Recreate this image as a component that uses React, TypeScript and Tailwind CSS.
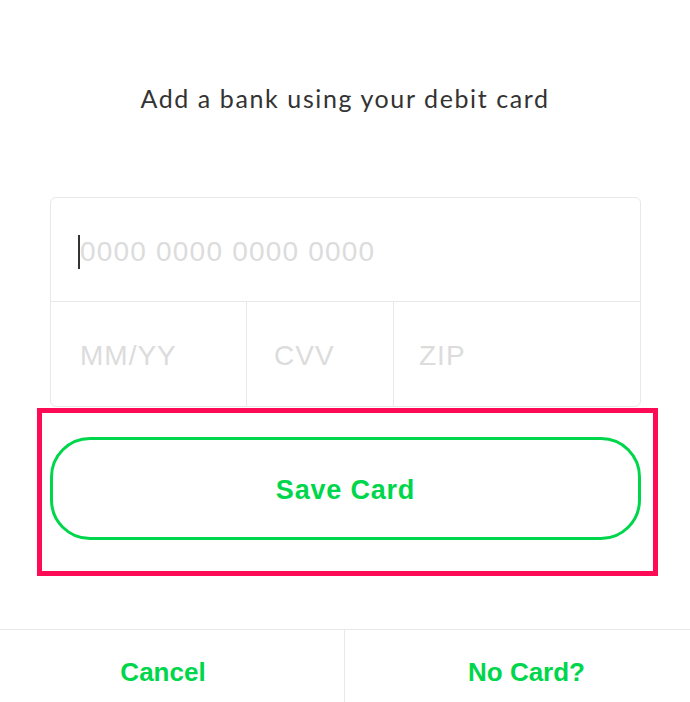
import React from "react";

export default function App() {
  return (
    <div className="w-[690px] h-[702px] bg-white flex flex-col overflow-hidden" style={{ fontFamily: '"Liberation Sans", Arial, sans-serif' }}>
      <div className="pt-[80px] h-[197px] text-center">
        <div className="text-[25px] leading-[36px] tracking-[1.6px] text-[#333333]" style={{ fontFamily: 'Lato, "Liberation Sans", sans-serif' }}>
          Add a bank using your debit card
        </div>
      </div>

      <div className="ml-[50px] w-[591px] h-[210px] border border-[#e8e8e8] rounded-[6px] flex flex-col">
        <div className="h-[103px] flex items-center pl-[27px] pt-[5px]">
          <div className="w-[2px] h-[34px] bg-[#333333]" />
          <div className="text-[28px] tracking-[1.2px] text-[#dcdcdc]">0000 0000 0000 0000</div>
        </div>
        <div className="flex-1 grid grid-cols-[196px_147px_1fr] border-t border-[#e8e8e8]">
          <div className="flex items-center pl-[29px] pt-[4px] text-[28px] tracking-[1px] text-[#dcdcdc] border-r border-[#e8e8e8]">MM/YY</div>
          <div className="flex items-center pl-[27px] pt-[4px] text-[28px] tracking-[1px] text-[#dcdcdc] border-r border-[#e8e8e8]">CVV</div>
          <div className="flex items-center pl-[25px] pt-[4px] text-[28px] tracking-[1px] text-[#dcdcdc]">ZIP</div>
        </div>
      </div>

      <div className="ml-[37px] mt-[1px] w-[621px] border-[5px] border-[#ff0a54] pt-[24px] pb-[31px] pl-[8px]">
        <div className="w-[591px] h-[103px] border-[3px] border-[#00d64b] rounded-[40px] flex items-center justify-center pt-[4px]">
          <span className="text-[27px] tracking-[0.8px] font-bold text-[#00d64b]">Save Card</span>
        </div>
      </div>

      <div className="flex-1" />

      <div className="h-[73px] border-t border-[#e8e8e8] grid grid-cols-[345px_1fr]">
        <div className="flex items-center justify-center pr-[18px] pt-[12px] border-r border-[#e8e8e8] text-[26px] font-bold text-[#00d64b]">Cancel</div>
        <div className="flex items-center justify-center pl-[18px] pt-[12px] text-[26px] font-bold text-[#00d64b]">No Card?</div>
      </div>
    </div>
  );
}
